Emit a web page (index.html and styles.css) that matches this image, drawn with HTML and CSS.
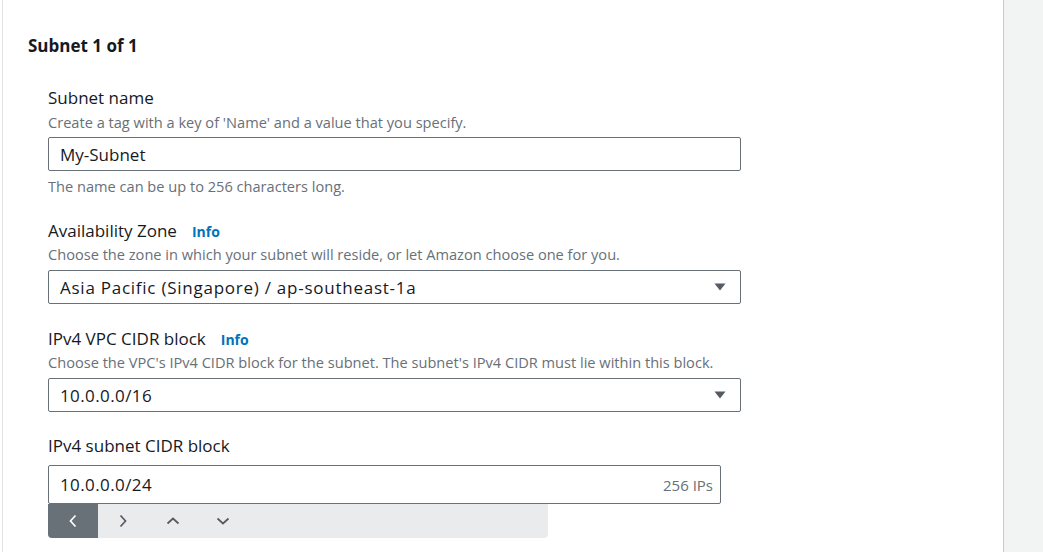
FILE: index.html
```html
<!DOCTYPE html>
<html lang="en">
<head>
<meta charset="utf-8">
<title>Subnet settings</title>
<link rel="stylesheet" href="styles.css">
</head>
<body>
<div class="layout">
  <main class="panel">
    <h2 class="title">Subnet 1 of 1</h2>

    <div class="field f-name">
      <div class="label">Subnet name</div>
      <div class="desc">Create a tag with a key of 'Name' and a value that you specify.</div>
      <div class="control input"><span class="value">My-Subnet</span></div>
      <div class="constraint">The name can be up to 256 characters long.</div>
    </div>

    <div class="field f-az">
      <div class="label">Availability Zone <a class="info">Info</a></div>
      <div class="desc tight">Choose the zone in which your subnet will reside, or let Amazon choose one for you.</div>
      <div class="control select">
        <span class="value wide">Asia Pacific (Singapore) / ap-southeast-1a</span>
        <svg class="caret" width="12" height="8" viewBox="0 0 12 8"><path d="M0.5 0.5h11L6 7.5z" fill="#545b64"/></svg>
      </div>
    </div>

    <div class="field f-vpc">
      <div class="label">IPv4 VPC CIDR block <a class="info">Info</a></div>
      <div class="desc tight">Choose the VPC's IPv4 CIDR block for the subnet. The subnet's IPv4 CIDR must lie within this block.</div>
      <div class="control select">
        <span class="value num">10.0.0.0/16</span>
        <svg class="caret" width="12" height="8" viewBox="0 0 12 8"><path d="M0.5 0.5h11L6 7.5z" fill="#545b64"/></svg>
      </div>
    </div>

    <div class="field f-cidr">
      <div class="label">IPv4 subnet CIDR block</div>
      <div class="control input cidr">
        <span class="value num">10.0.0.0/24</span>
        <span class="count">256 IPs</span>
      </div>
      <div class="stepper">
        <span class="step active"><svg width="8" height="14" viewBox="0 0 8 14"><path d="M6.5 1.5L1.5 7l5 5.5" fill="none" stroke="#fff" stroke-width="1.7"/></svg></span>
        <span class="step"><svg width="8" height="14" viewBox="0 0 8 14"><path d="M1.5 1.5L6.5 7l-5 5.5" fill="none" stroke="#545b64" stroke-width="1.7"/></svg></span>
        <span class="step"><svg width="14" height="8" viewBox="0 0 14 8"><path d="M1.5 6.5L7 1.5l5.5 5" fill="none" stroke="#545b64" stroke-width="1.7"/></svg></span>
        <span class="step"><svg width="14" height="8" viewBox="0 0 14 8"><path d="M1.5 1.5L7 6.5l5.5-5" fill="none" stroke="#545b64" stroke-width="1.7"/></svg></span>
      </div>
    </div>
  </main>
  <aside class="side"></aside>
</div>
</body>
</html>
```

FILE: styles.css
```css
* { box-sizing: border-box; }
html, body { margin: 0; padding: 0; background: #fff; }
body {
  font-family: "Open Sans", "Noto Sans", Arial, sans-serif;
  color: #16191f;
  height: 552px;
  overflow: hidden;
}
.layout {
  display: flex;
  height: 552px;
}
.panel {
  margin-left: 2px;
  width: 1002px;
  border-left: 1px solid #e1e4e4;
  border-right: 1px solid #c8cbcb;
  padding: 0 0 0 25px;
  background: #fff;
}
.side {
  flex: 1;
  background: #f2f3f3;
}
.title {
  margin: 35px 0 0 0;
  font-size: 17px;
  line-height: 22px;
  font-weight: 700;
}
.field {
  padding-left: 20px;
  margin-top: 22px;
}
.f-name { margin-top: 30px; }
.f-az { margin-top: 24px; }
.f-vpc { margin-top: 24px; }
.f-cidr { margin-top: 23px; }
.label {
  font-size: 17px;
  line-height: 22px;
  display: flex;
  align-items: baseline;
}
.info {
  font-size: 14px;
  font-weight: 700;
  color: #0073bb;
  margin-left: 15px;
}
.desc {
  font-size: 14.6px;
  line-height: 20px;
  color: #687078;
  margin-top: 3px;
}
.desc.tight { margin-top: 1px; }
.desc.tight + .control { margin-top: 6px; }
.control {
  width: 693px;
  height: 34px;
  margin-top: 5px;
  border: 1px solid #687078;
  border-radius: 2px;
  display: flex;
  align-items: center;
  padding: 0 11px;
  font-size: 17px;
}
.value.wide { letter-spacing: 0.75px; }
.value.num { letter-spacing: 0.4px; }
.select { justify-content: space-between; padding-right: 14px; }
.constraint {
  font-size: 14.6px;
  line-height: 20px;
  color: #687078;
  margin-top: 5px;
}
.cidr {
  width: 673px;
  height: 39px;
  margin-top: 8px;
  justify-content: space-between;
  padding-right: 7px;
}
.count {
  font-size: 15px;
  color: #687078;
}
.stepper {
  width: 500px;
  height: 34px;
  background: #e9ebed;
  border-radius: 0 0 4px 4px;
  display: flex;
  overflow: hidden;
}
.step {
  width: 50px;
  height: 34px;
  display: flex;
  align-items: center;
  justify-content: center;
}
.step.active { background: #687078; }
```
